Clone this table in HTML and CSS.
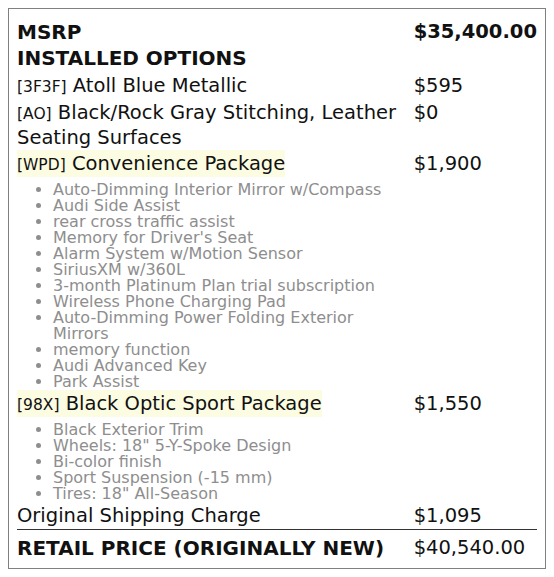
FILE: index.html
```html
<!DOCTYPE html>
<html>
<head>
<meta charset="utf-8">
<link rel="stylesheet" href="styles.css">
</head>
<body>
<div class="sticker">
<table class="prices">
<tr class="bold"><td class="label">MSRP</td><td class="price">$35,400.00</td></tr>
<tr class="bold head"><td class="label" colspan="2">INSTALLED OPTIONS</td></tr>
<tr><td class="label"><span class="code">[3F3F]</span> Atoll Blue Metallic</td><td class="price">$595</td></tr>
<tr><td class="label"><span class="code">[AO]</span> Black/Rock Gray Stitching, Leather Seating Surfaces</td><td class="price">$0</td></tr>
<tr><td class="label"><span class="pkg"><span class="code">[WPD]</span> Convenience Package</span>
<ul class="feats">
<li>Auto-Dimming Interior Mirror w/Compass</li>
<li>Audi Side Assist</li>
<li>rear cross traffic assist</li>
<li>Memory for Driver's Seat</li>
<li>Alarm System w/Motion Sensor</li>
<li>SiriusXM w/360L</li>
<li>3-month Platinum Plan trial subscription</li>
<li>Wireless Phone Charging Pad</li>
<li>Auto-Dimming Power Folding Exterior Mirrors</li>
<li>memory function</li>
<li>Audi Advanced Key</li>
<li>Park Assist</li>
</ul></td><td class="price">$1,900</td></tr>
<tr><td class="label"><span class="pkg"><span class="code">[98X]</span> Black Optic Sport Package</span>
<ul class="feats">
<li>Black Exterior Trim</li>
<li>Wheels: 18" 5-Y-Spoke Design</li>
<li>Bi-color finish</li>
<li>Sport Suspension (-15 mm)</li>
<li>Tires: 18" All-Season</li>
</ul></td><td class="price">$1,550</td></tr>
<tr><td class="label">Original Shipping Charge</td><td class="price">$1,095</td></tr>
<tr class="total"><td class="label bold">RETAIL PRICE (ORIGINALLY NEW)</td><td class="price">$40,540.00</td></tr>
</table>
</div>
</body>
</html>
```

FILE: styles.css
```css
html, body {
  margin: 0;
  padding: 0;
  background: #ffffff;
}
body {
  padding: 8px;
  font-family: "DejaVu Sans", sans-serif;
  color: #111;
}
.sticker {
  width: 520px;
  border: 1px solid #808080;
  padding: 10px 8px 7px 8px;
}
.prices {
  width: 100%;
  border-collapse: collapse;
  font-size: 19.5px;
  line-height: 24px;
}
.prices td {
  padding: 1px 0 1px 0;
  vertical-align: top;
}
.prices td.label {
  padding-right: 4px;
}
.price {
  width: 123px;
  white-space: nowrap;
}
.bold td, td.bold {
  font-weight: bold;
}
.bold td.label, td.label.bold {
  font-size: 20px;
}
.prices tr.head td {
  padding-bottom: 3px;
}
.code {
  font-size: 15.5px;
}
.pkg {
  background: #fcfce2;
  padding: 2px 0;
}
.feats {
  margin: 5px 0 0 0;
  padding-left: 36px;
  color: #8e8e8e;
  font-size: 16px;
  line-height: 16px;
}
.prices tr.total td {
  border-top: 1px solid #333;
  padding-top: 6px;
}
```
